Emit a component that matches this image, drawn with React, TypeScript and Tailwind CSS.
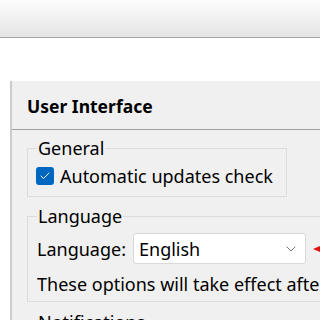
import { Check, ChevronDown } from 'lucide-react';

export default function App() {
  return (
    <div className="w-[320px] h-[320px] overflow-hidden bg-white flex flex-col text-[18px] text-black font-['Noto_Sans',sans-serif]">
      {/* toolbar strip */}
      <div className="h-[38px] shrink-0 bg-gradient-to-b from-[#fdfdfd] to-[#e4e4e4] border-b border-[#a3a3a3]" />
      <div className="h-[43px] shrink-0" />

      {/* settings page */}
      <div className="ml-[10px] flex-1 border-l-2 border-[#cccccc] bg-[#f0f0f0] flex flex-col">
        <div className="h-[49px] shrink-0 border-b border-[#a0a0a0] pl-[15px] pt-[13px] text-[17.5px] font-bold leading-[24px] w-[400px]">
          User Interface
        </div>

        <div className="pl-[15px] pt-[6px] flex flex-col">
          <fieldset className="w-[260px] border border-[#dcdcdc] pl-[8px] pb-[8px]">
            <legend className="ml-[1px] px-[1px] leading-[24px]">General</legend>
            <label className="flex items-center gap-[6px] mt-[4px] leading-[24px]">
              <span className="w-[18px] h-[18px] rounded-[3px] bg-[#0067c0] flex items-center justify-center">
                <Check size={12} strokeWidth={2} color="white" />
              </span>
              Automatic updates check
            </label>
          </fieldset>

          <fieldset className="mt-[7px] w-[400px] border border-[#dcdcdc] pl-[9px] pb-[5px]">
            <legend className="px-[1px] leading-[24px]">Language</legend>
            <div className="flex items-center mt-[5px]">
              <span className="w-[96px] leading-[24px]">Language:</span>
              <div className="w-[173px] h-[31px] bg-white border border-[#d9d9d9] rounded-[3px] flex items-center justify-between pl-[5px] pr-[6px]">
                <span className="leading-[24px]">English</span>
                <ChevronDown size={16} strokeWidth={1.2} color="#555" />
              </div>
              <svg width="12" height="10" viewBox="0 0 12 10" className="ml-[7px]">
                <polygon points="0,5 12,0 12,10" fill="#e01010" />
              </svg>
            </div>
            <div className="mt-[8px] leading-[24px] whitespace-nowrap">These options will take effect after restart</div>
          </fieldset>

          <fieldset className="mt-[8px] w-[400px] border border-[#dcdcdc] pl-[9px] h-[60px]">
            <legend className="px-[1px] leading-[24px]">Notifications</legend>
          </fieldset>
        </div>
      </div>
    </div>
  );
}
